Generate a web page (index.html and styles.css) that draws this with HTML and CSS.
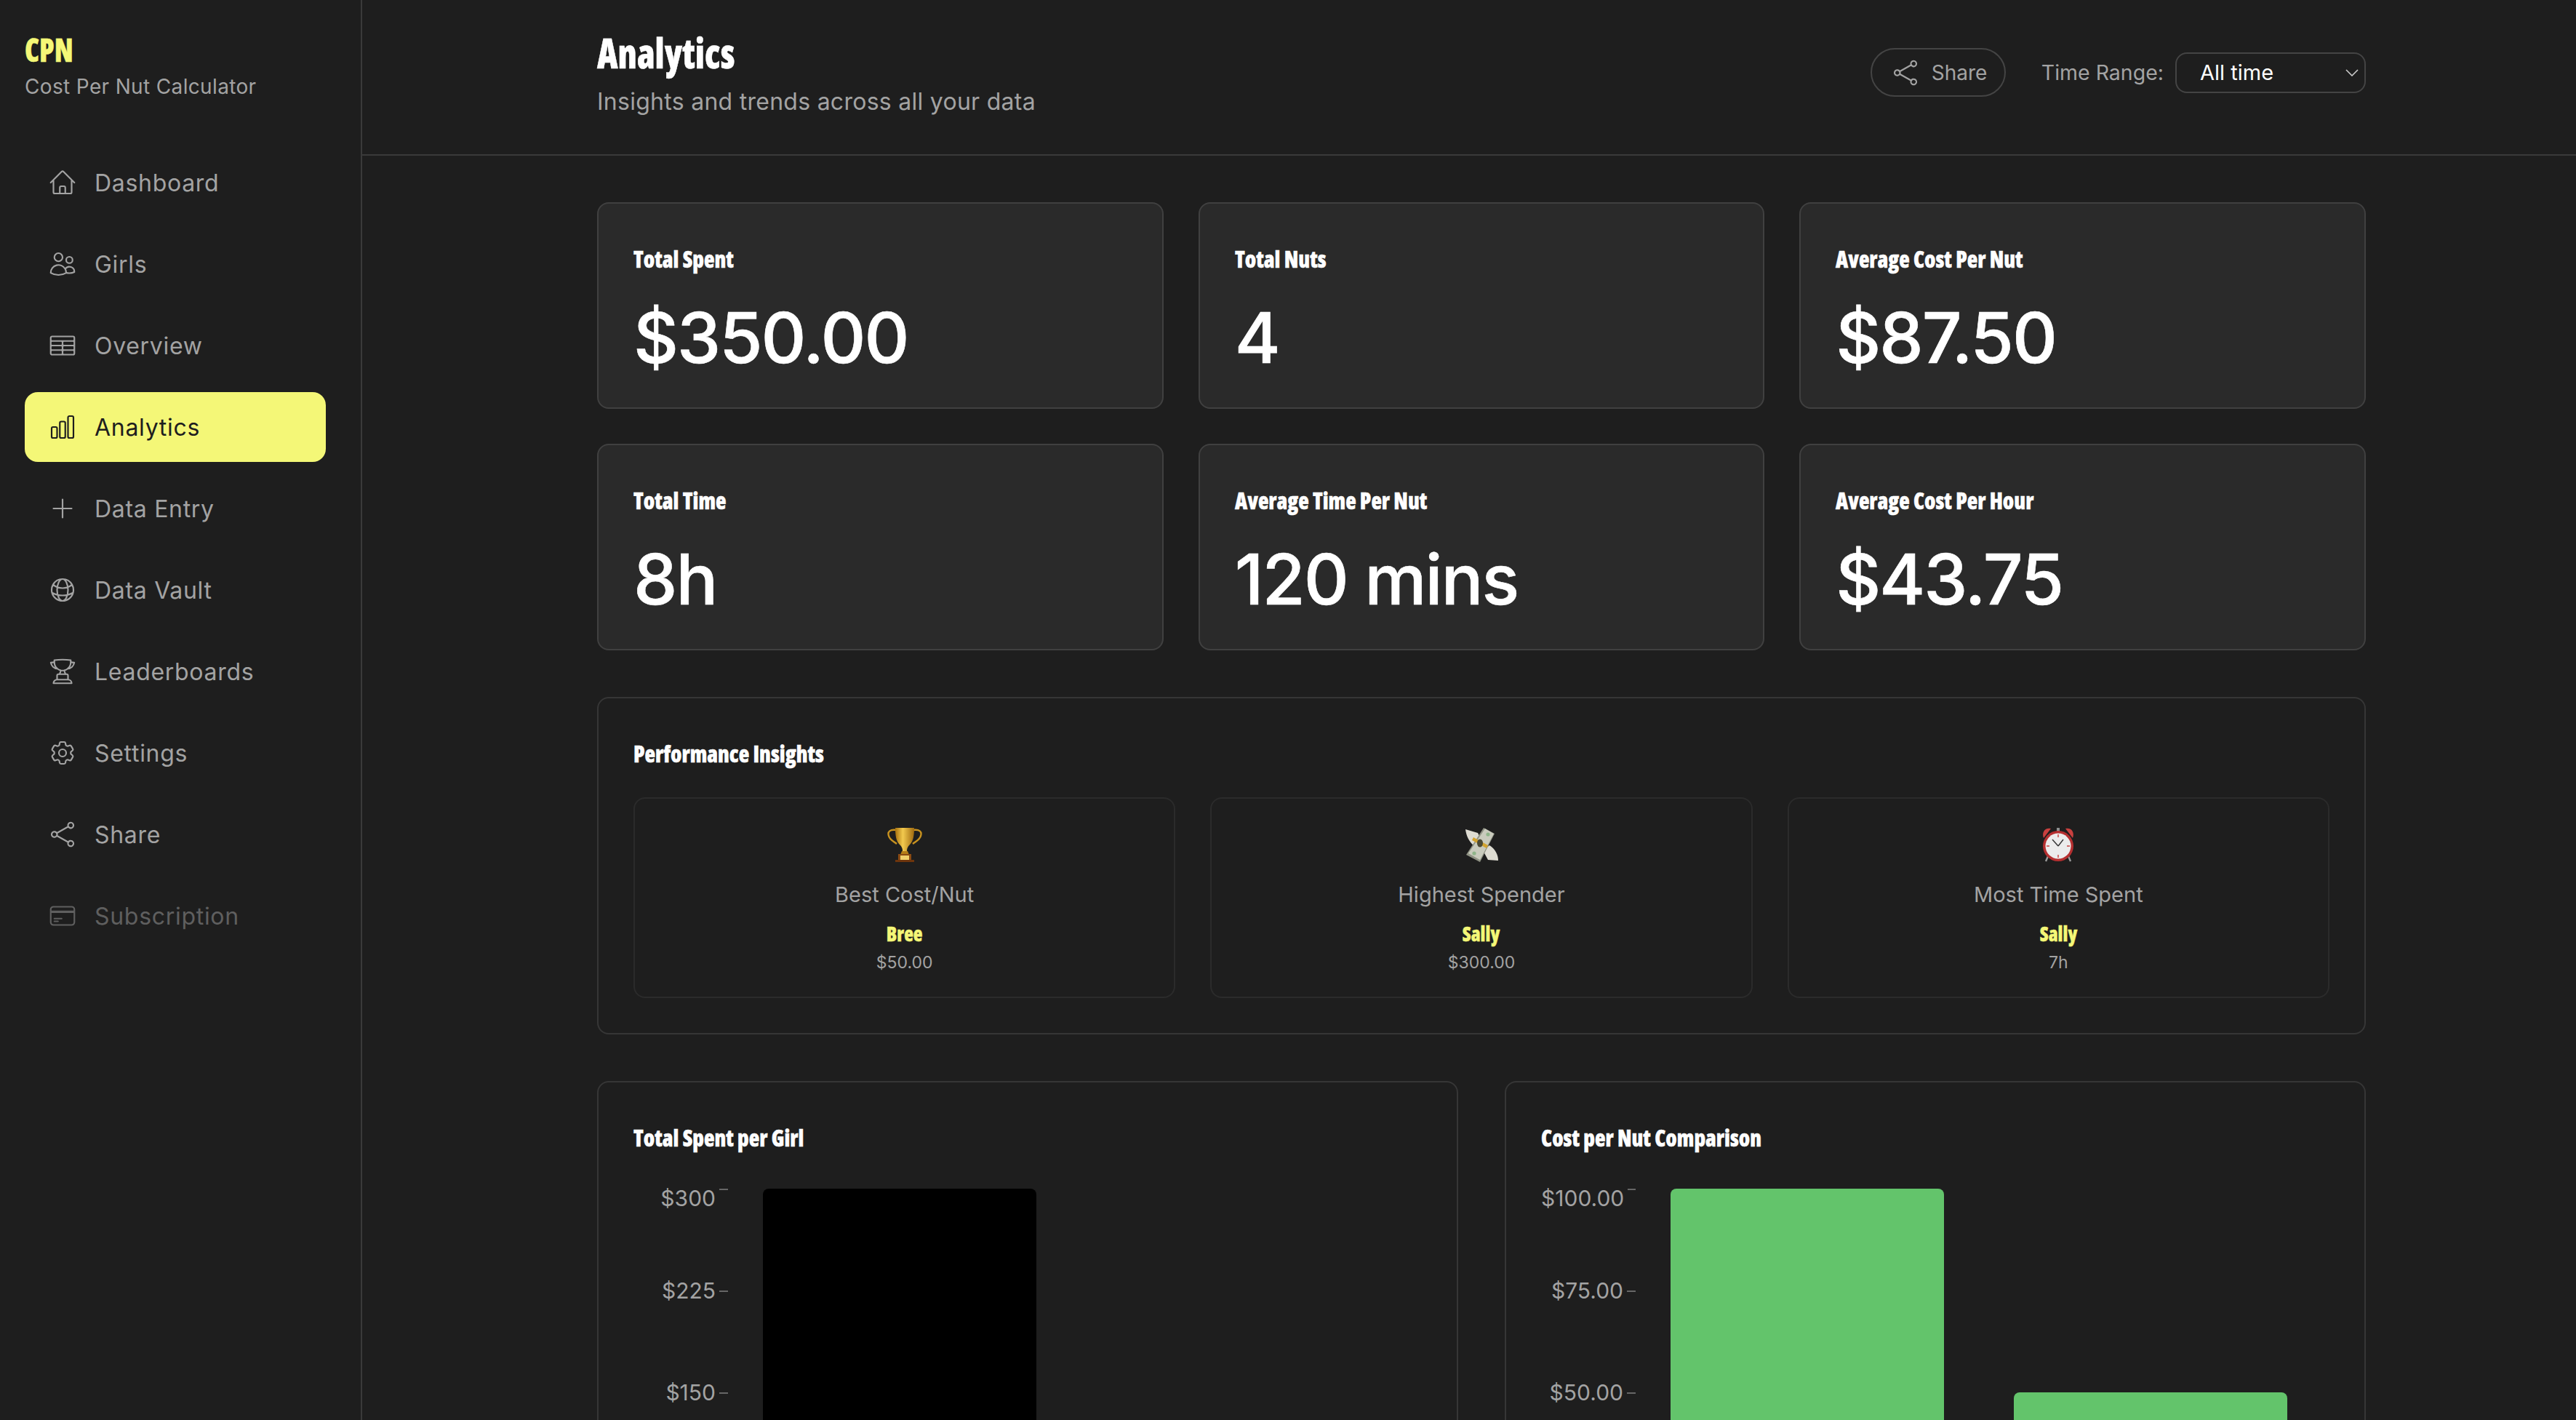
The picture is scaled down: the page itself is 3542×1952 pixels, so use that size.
FILE: index.html
```html
<!DOCTYPE html>
<html lang="en">
<head>
    <meta charset="UTF-8">
    <meta name="viewport" content="width=device-width, initial-scale=1.0">
    <title>CPN - Analytics</title>
    <link rel="stylesheet" href="styles.css">
</head>
<body>
    <aside class="sidebar">
        <div class="brand display">CPN</div>
        <div class="tagline">Cost Per Nut Calculator</div>
        <nav class="nav">
            <a class="nav-item"><svg class="icon" viewBox="0 0 24 24"><path d="m2.25 12 8.954-8.955c.44-.439 1.152-.439 1.591 0L21.75 12M4.5 9.75v10.125c0 .621.504 1.125 1.125 1.125H9.75v-4.875c0-.621.504-1.125 1.125-1.125h2.25c.621 0 1.125.504 1.125 1.125V21h4.125c.621 0 1.125-.504 1.125-1.125V9.75M8.25 21h8.25"/></svg>Dashboard</a>
            <a class="nav-item"><svg class="icon" viewBox="0 0 24 24"><path d="M15 19.128a9.38 9.38 0 0 0 2.625.372 9.337 9.337 0 0 0 4.121-.952 4.125 4.125 0 0 0-7.533-2.493M15 19.128v-.003c0-1.113-.285-2.16-.786-3.07M15 19.128v.106A12.318 12.318 0 0 1 8.624 21c-2.331 0-4.512-.645-6.374-1.766l-.001-.109a6.375 6.375 0 0 1 11.964-3.07M12 6.375a3.375 3.375 0 1 1-6.75 0 3.375 3.375 0 0 1 6.75 0Zm8.25 2.25a2.625 2.625 0 1 1-5.25 0 2.625 2.625 0 0 1 5.25 0Z"/></svg>Girls</a>
            <a class="nav-item"><svg class="icon" viewBox="0 0 24 24"><path d="M3.375 19.5h17.25m-17.25 0a1.125 1.125 0 0 1-1.125-1.125M3.375 19.5h7.5c.621 0 1.125-.504 1.125-1.125m-9.75 0V5.625m0 12.75v-1.5c0-.621.504-1.125 1.125-1.125m18.375 2.625V5.625m0 12.75c0 .621-.504 1.125-1.125 1.125m1.125-1.125v-1.5c0-.621-.504-1.125-1.125-1.125m0 3.75h-7.5A1.125 1.125 0 0 1 12 18.375m9.75-12.75c0-.621-.504-1.125-1.125-1.125H3.375c-.621 0-1.125.504-1.125 1.125m19.5 0v1.5c0 .621-.504 1.125-1.125 1.125M2.25 5.625v1.5c0 .621.504 1.125 1.125 1.125m0 0h17.25m-17.25 0h7.5c.621 0 1.125.504 1.125 1.125M3.375 8.25c-.621 0-1.125.504-1.125 1.125v1.5c0 .621.504 1.125 1.125 1.125m17.25-3.75h-7.5c-.621 0-1.125.504-1.125 1.125m8.625-1.125c.621 0 1.125.504 1.125 1.125v1.5c0 .621-.504 1.125-1.125 1.125m-17.25 0h7.5m-7.5 0c-.621 0-1.125.504-1.125 1.125v1.5c0 .621.504 1.125 1.125 1.125M12 10.875v-1.5m0 1.5c0 .621-.504 1.125-1.125 1.125M12 10.875c0 .621.504 1.125 1.125 1.125m-2.25 0c.621 0 1.125.504 1.125 1.125M13.125 12h7.5m-7.5 0c-.621 0-1.125.504-1.125 1.125M20.625 12c.621 0 1.125.504 1.125 1.125v1.5c0 .621-.504 1.125-1.125 1.125m-17.25 0h7.5M12 14.625v-1.5m0 1.5c0 .621-.504 1.125-1.125 1.125M12 14.625c0 .621.504 1.125 1.125 1.125m-2.25 0c.621 0 1.125.504 1.125 1.125m0 1.5v-1.5m0 0c0-.621.504-1.125 1.125-1.125m0 0h7.5"/></svg>Overview</a>
            <a class="nav-item active"><svg class="icon" viewBox="0 0 24 24"><path d="M3 13.125C3 12.504 3.504 12 4.125 12h2.25c.621 0 1.125.504 1.125 1.125v6.75C7.5 20.496 6.996 21 6.375 21h-2.25A1.125 1.125 0 0 1 3 19.875v-6.75ZM9.75 8.625c0-.621.504-1.125 1.125-1.125h2.25c.621 0 1.125.504 1.125 1.125v11.25c0 .621-.504 1.125-1.125 1.125h-2.25a1.125 1.125 0 0 1-1.125-1.125V8.625ZM16.5 4.125c0-.621.504-1.125 1.125-1.125h2.25C20.496 3 21 3.504 21 4.125v15.75c0 .621-.504 1.125-1.125 1.125h-2.25a1.125 1.125 0 0 1-1.125-1.125V4.125Z"/></svg>Analytics</a>
            <a class="nav-item"><svg class="icon" viewBox="0 0 24 24"><path d="M12 4.5v15m7.5-7.5h-15"/></svg>Data Entry</a>
            <a class="nav-item"><svg class="icon" viewBox="0 0 24 24"><path d="M12 21a9.004 9.004 0 0 0 8.716-6.747M12 21a9.004 9.004 0 0 1-8.716-6.747M12 21c2.485 0 4.5-4.03 4.5-9S14.485 3 12 3m0 18c-2.485 0-4.5-4.03-4.5-9S9.515 3 12 3m0 0a8.997 8.997 0 0 1 7.843 4.582M12 3a8.997 8.997 0 0 0-7.843 4.582m15.686 0A11.953 11.953 0 0 1 12 10.5c-2.998 0-5.74-1.1-7.843-2.918m15.686 0A8.959 8.959 0 0 1 21 12c0 .778-.099 1.533-.284 2.253m0 0A17.919 17.919 0 0 1 12 16.5c-3.162 0-6.133-.815-8.716-2.247m0 0A9.015 9.015 0 0 1 3 12c0-1.605.42-3.113 1.157-4.418"/></svg>Data Vault</a>
            <a class="nav-item"><svg class="icon" viewBox="0 0 24 24"><path d="M16.5 18.75h-9m9 0a3 3 0 0 1 3 3h-15a3 3 0 0 1 3-3m9 0v-3.375c0-.621-.503-1.125-1.125-1.125h-.871M7.5 18.75v-3.375c0-.621.504-1.125 1.125-1.125h.872m5.007 0H9.497m5.007 0a7.454 7.454 0 0 1-.982-3.172M9.497 14.25a7.454 7.454 0 0 0 .981-3.172M5.25 4.236c-.982.143-1.954.317-2.916.52A6.003 6.003 0 0 0 7.73 9.728M5.25 4.236V4.5c0 2.108.966 3.99 2.48 5.228M5.25 4.236V2.721C7.456 2.41 9.71 2.25 12 2.25c2.291 0 4.545.16 6.75.47v1.516M7.73 9.728a6.726 6.726 0 0 0 2.748 1.35m8.272-6.842V4.5c0 2.108-.966 3.99-2.48 5.228m2.48-5.492a46.32 46.32 0 0 1 2.916.52 6.003 6.003 0 0 1-5.395 4.972m0 0a6.726 6.726 0 0 1-2.749 1.35m0 0a6.772 6.772 0 0 1-3.044 0"/></svg>Leaderboards</a>
            <a class="nav-item"><svg class="icon" viewBox="0 0 24 24"><path d="M9.594 3.94c.09-.542.56-.94 1.11-.94h2.593c.55 0 1.02.398 1.11.94l.213 1.281c.063.374.313.686.645.87.074.04.147.083.22.127.325.196.72.257 1.075.124l1.217-.456a1.125 1.125 0 0 1 1.37.49l1.296 2.247a1.125 1.125 0 0 1-.26 1.431l-1.003.827c-.293.241-.438.613-.43.992a7.723 7.723 0 0 1 0 .255c-.008.378.137.75.43.991l1.004.827c.424.35.534.955.26 1.43l-1.298 2.247a1.125 1.125 0 0 1-1.369.491l-1.217-.456c-.355-.133-.75-.072-1.076.124a6.47 6.47 0 0 1-.22.128c-.331.183-.581.495-.644.869l-.213 1.281c-.09.543-.56.94-1.11.94h-2.594c-.55 0-1.019-.398-1.11-.94l-.213-1.281c-.062-.374-.312-.686-.644-.87a6.52 6.52 0 0 1-.22-.127c-.325-.196-.72-.257-1.076-.124l-1.217.456a1.125 1.125 0 0 1-1.369-.49l-1.297-2.247a1.125 1.125 0 0 1 .26-1.431l1.004-.827c.292-.24.437-.613.43-.991a6.932 6.932 0 0 1 0-.255c.007-.38-.138-.751-.43-.992l-1.004-.827a1.125 1.125 0 0 1-.26-1.43l1.297-2.247a1.125 1.125 0 0 1 1.37-.491l1.216.456c.356.133.751.072 1.076-.124.072-.044.146-.086.22-.128.332-.183.582-.495.644-.869l.214-1.28Z"/><path d="M15 12a3 3 0 1 1-6 0 3 3 0 0 1 6 0Z"/></svg>Settings</a>
            <a class="nav-item"><svg class="icon" viewBox="0 0 24 24"><path d="M7.217 10.907a2.25 2.25 0 1 0 0 2.186m0-2.186c.18.324.283.696.283 1.093s-.103.77-.283 1.093m0-2.186 9.566-5.314m-9.566 7.5 9.566 5.314m0 0a2.25 2.25 0 1 0 3.935 2.186 2.25 2.25 0 0 0-3.935-2.186Zm0-12.814a2.25 2.25 0 1 0 3.933-2.185 2.25 2.25 0 0 0-3.933 2.185Z"/></svg>Share</a>
            <a class="nav-item disabled"><svg class="icon" viewBox="0 0 24 24"><path d="M2.25 8.25h19.5M2.25 9h19.5m-16.5 5.25h6m-6 2.25h3m-3.75 3h15a2.25 2.25 0 0 0 2.25-2.25V6.75A2.25 2.25 0 0 0 19.5 4.5h-15a2.25 2.25 0 0 0-2.25 2.25v10.5A2.25 2.25 0 0 0 4.5 19.5Z"/></svg>Subscription</a>
        </nav>
    </aside>

    <main class="main">
        <header class="page-header">
            <div>
                <h1 class="display">Analytics</h1>
                <p class="subtitle">Insights and trends across all your data</p>
            </div>
            <div class="header-actions">
                <button class="share-btn" type="button"><svg class="icon" viewBox="0 0 24 24"><path d="M7.217 10.907a2.25 2.25 0 1 0 0 2.186m0-2.186c.18.324.283.696.283 1.093s-.103.77-.283 1.093m0-2.186 9.566-5.314m-9.566 7.5 9.566 5.314m0 0a2.25 2.25 0 1 0 3.935 2.186 2.25 2.25 0 0 0-3.935-2.186Zm0-12.814a2.25 2.25 0 1 0 3.933-2.185 2.25 2.25 0 0 0-3.933 2.185Z"/></svg>Share</button>
                <label class="range-label" for="range">Time Range:</label>
                <select class="range-select" id="range">
                    <option>All time</option>
                    <option>Last 30 days</option>
                </select>
            </div>
        </header>

        <div class="content">
            <section class="stat-grid">
                <div class="stat-card"><div class="stat-label display">Total Spent</div><div class="stat-value">$350.00</div></div>
                <div class="stat-card"><div class="stat-label display">Total Nuts</div><div class="stat-value">4</div></div>
                <div class="stat-card"><div class="stat-label display">Average Cost Per Nut</div><div class="stat-value">$87.50</div></div>
                <div class="stat-card"><div class="stat-label display">Total Time</div><div class="stat-value">8h</div></div>
                <div class="stat-card"><div class="stat-label display">Average Time Per Nut</div><div class="stat-value">120 mins</div></div>
                <div class="stat-card"><div class="stat-label display">Average Cost Per Hour</div><div class="stat-value">$43.75</div></div>
            </section>

            <section class="panel">
                <h2 class="panel-title display">Performance Insights</h2>
                <div class="insight-grid">
                    <div class="insight">
                        <svg class="emoji" viewBox="0 0 48 48">
                            <defs>
                                <linearGradient id="gold" x1="0" x2="1" y1="0" y2="0">
                                    <stop offset="0" stop-color="#a8720f"/>
                                    <stop offset=".4" stop-color="#f2c94e"/>
                                    <stop offset="1" stop-color="#a06a10"/>
                                </linearGradient>
                            </defs>
                            <path d="M12 4C4 3 0 6 2 12c1 5 6 7 11 11M36 4c8-1 12 2 10 8-1 5-6 7-11 11" fill="none" stroke="#c8921f" stroke-width="2.4"/>
                            <path d="M11 1h26c0 10-1 18-6 23-3 3-4 5-4 9h-6c0-4-1-6-4-9C12 19 11 11 11 1Z" fill="url(#gold)"/>
                            <path d="M20 33h8l2 5H18Z" fill="#b57d17"/>
                            <rect x="15" y="37" width="18" height="9" fill="#8a4a12"/>
                            <rect x="18" y="39" width="12" height="6" fill="#f0cf6a"/>
                            <rect x="11" y="45" width="26" height="3" fill="#6d340c"/>
                        </svg>
                        <div class="insight-label">Best Cost/Nut</div>
                        <div class="insight-name display">Bree</div>
                        <div class="insight-value">$50.00</div>
                    </div>
                    <div class="insight">
                        <svg class="emoji" viewBox="0 0 48 48">
                            <path d="M2 3l17 5 6 12-11 6C7 20 3 12 2 3ZM47 46l-14-1-7-13 9-7c8 5 12 13 12 21Z" fill="#dedcd2"/>
                            <path d="M27 1l15 8-20 39L3 38Z" fill="#8f9284"/>
                            <path d="M29 2l12 7-19 36L6 36Z" fill="#c9cbbd"/>
                            <path d="M13 14l20 11-2 4-20-11Z" fill="#d2a32f"/>
                            <ellipse cx="22" cy="22" rx="4" ry="5.5" fill="#4c4a35"/>
                            <circle cx="33" cy="10" r="2.6" fill="#8fb58a"/>
                            <circle cx="14" cy="36" r="2.6" fill="#8fb58a"/>
                        </svg>
                        <div class="insight-label">Highest Spender</div>
                        <div class="insight-name display">Sally</div>
                        <div class="insight-value">$300.00</div>
                    </div>
                    <div class="insight">
                        <svg class="emoji" viewBox="0 0 48 48">
                            <path d="M4 15C1 7 6 0 14 2ZM44 15c3-8-2-15-10-13Z" fill="#c9403f"/>
                            <rect x="22" y="1" width="4" height="5" fill="#8e8e8e"/>
                            <path d="M10 40l-3 7M38 40l3 7" stroke="#9a9a9a" stroke-width="2.4"/>
                            <circle cx="24" cy="26" r="21" fill="#b52f30"/>
                            <circle cx="24" cy="26" r="17.5" fill="#ececec"/>
                            <path d="M24 10v4M24 38v4M8 26h4M36 26h4" stroke="#c9403f" stroke-width="1.4"/>
                            <path d="M24 26L16 17M24 26l7-9" stroke="#333" stroke-width="1.4" fill="none"/>
                        </svg>
                        <div class="insight-label">Most Time Spent</div>
                        <div class="insight-name display">Sally</div>
                        <div class="insight-value">7h</div>
                    </div>
                </div>
            </section>

            <section class="chart-grid">
                <div class="panel">
                    <h2 class="chart-title display">Total Spent per Girl</h2>
                    <div class="chart">
                        <div class="y-axis">
                            <div class="tick"><span class="tick-label first">$300</span></div>
                            <div class="tick"><span class="tick-label">$225</span></div>
                            <div class="tick"><span class="tick-label">$150</span></div>
                        </div>
                        <div class="plot">
                            <div class="bar black" style="height: 560px"></div>
                            <div class="bar black" style="height: 93px"></div>
                        </div>
                    </div>
                </div>
                <div class="panel">
                    <h2 class="chart-title display">Cost per Nut Comparison</h2>
                    <div class="chart">
                        <div class="y-axis">
                            <div class="tick"><span class="tick-label first">$100.00</span></div>
                            <div class="tick"><span class="tick-label">$75.00</span></div>
                            <div class="tick"><span class="tick-label">$50.00</span></div>
                        </div>
                        <div class="plot">
                            <div class="bar green" style="height: 560px"></div>
                            <div class="bar green" style="height: 280px"></div>
                        </div>
                    </div>
                </div>
            </section>
        </div>
    </main>
</body>
</html>
```

FILE: styles.css
```css
* {
    box-sizing: border-box;
}
html, body {
    height: 100%;
}
body {
    margin: 0;
    display: flex;
    overflow: hidden;
    background-color: #1e1e1e;
    color: #fff;
    font-family: Inter, "Liberation Sans", sans-serif;
}
h1, h2, p {
    margin: 0;
}
/* heavy condensed face for titles, squeezed a bit more than the font allows */
.display {
    font-family: "Open Sans", "Liberation Sans", sans-serif;
    font-stretch: 75%;
    font-weight: 800;
    -webkit-text-stroke: 0.5px currentColor;
    transform: scaleX(0.935);
    transform-origin: left;
}
.icon {
    width: 40px;
    height: 40px;
    flex: none;
    fill: none;
    stroke: currentColor;
    stroke-width: 1.3;
    stroke-linecap: round;
    stroke-linejoin: round;
}

/* sidebar */
.sidebar {
    width: 498px;
    flex: none;
    padding: 44px 48px 0 34px;
    border-right: 2px solid #3a3a3a;
}
.brand {
    font-size: 44px;
    line-height: 48px;
    color: #f4f777;
    transform: scaleX(0.9);
}
.tagline {
    margin-top: 7px;
    font-size: 28px;
    line-height: 40px;
    letter-spacing: 0.35px;
    color: #a3a3a3;
}
.nav {
    margin-top: 64px;
    display: flex;
    flex-direction: column;
    gap: 16px;
}
.nav-item {
    height: 96px;
    padding-left: 32px;
    display: flex;
    align-items: center;
    gap: 24px;
    border-radius: 18px;
    font-size: 32px;
    letter-spacing: 0.7px;
    color: #a3a3a3;
}
.nav-item.active {
    background-color: #f4f777;
    color: #1e1e1e;
}
.nav-item.disabled {
    color: #5f5f5f;
}

/* header */
.main {
    flex: 1;
    min-width: 0;
}
.page-header {
    height: 214px;
    padding: 42px 289px 0 323px;
    display: flex;
    justify-content: space-between;
    border-bottom: 2px solid #3a3a3a;
}
h1.display {
    font-size: 56px;
    line-height: 60px;
    transform: scaleX(0.89);
}
.subtitle {
    margin-top: 16px;
    font-size: 32px;
    line-height: 44px;
    letter-spacing: 0.27px;
    color: #a3a3a3;
}
.header-actions {
    height: 67px;
    margin-top: 24px;
    display: flex;
    align-items: center;
}
.share-btn {
    width: 186px;
    height: 67px;
    padding: 0 0 0 26px;
    display: flex;
    align-items: center;
    gap: 16px;
    background: none;
    border: 2px solid #444;
    border-radius: 34px;
    color: #a3a3a3;
    font-family: inherit;
    font-size: 28px;
}
.range-label {
    margin: 0 16px 0 49px;
    font-size: 28.5px;
    color: #a3a3a3;
}
.range-select {
    width: 262px;
    height: 56px;
    padding: 0 0 0 32px;
    appearance: none;
    background: #1e1e1e url("data:image/svg+xml,%3Csvg xmlns='http://www.w3.org/2000/svg' width='18' height='10'%3E%3Cpath d='M1 1l8 8 8-8' fill='none' stroke='%23ccc' stroke-width='1.6'/%3E%3C/svg%3E") no-repeat right 8px center;
    border: 2px solid #444;
    border-radius: 16px;
    color: #fff;
    font-family: inherit;
    font-size: 29px;
}

/* content */
.content {
    padding: 64px 289px 0 323px;
    display: flex;
    flex-direction: column;
    gap: 64px;
}
.stat-grid {
    display: grid;
    grid-template-columns: repeat(3, 1fr);
    gap: 48px;
}
.stat-card {
    height: 284px;
    padding: 48px;
    background-color: #2a2a2a;
    border: 2px solid #404040;
    border-radius: 16px;
}
.stat-label {
    font-size: 32px;
    line-height: 56px;
}
.stat-value {
    margin-top: 32px;
    font-size: 96px;
    font-weight: 500;
    line-height: 96px;
    letter-spacing: -2px;
    -webkit-text-stroke: 0.6px currentColor;
}
.panel {
    padding: 48px;
    border: 2px solid #363636;
    border-radius: 16px;
}
.panel-title {
    font-size: 32px;
    line-height: 56px;
    margin-bottom: 32px;
}
.insight-grid {
    display: grid;
    grid-template-columns: repeat(3, 1fr);
    gap: 48px;
}
.insight {
    padding: 39px 0 29px;
    display: flex;
    flex-direction: column;
    align-items: center;
    border: 2px solid #2b2b2b;
    border-radius: 16px;
}
.emoji {
    width: 48px;
    height: 48px;
    margin-bottom: 25px;
}
.insight-label {
    font-size: 29px;
    line-height: 40px;
    color: #a3a3a3;
}
.insight-name {
    margin-top: 13px;
    font-size: 28px;
    line-height: 40px;
    color: #f4f777;
    transform-origin: center;
}
.insight-value {
    margin-top: 2px;
    font-size: 23px;
    line-height: 36px;
    color: #a3a3a3;
}

/* charts */
.chart-grid {
    display: grid;
    grid-template-columns: repeat(2, 1fr);
    gap: 64px;
}
.chart-title {
    font-size: 32px;
    line-height: 56px;
    margin-bottom: 42px;
}
.chart {
    display: flex;
}
.y-axis {
    width: 130px;
    flex: none;
}
.tick {
    height: 140px;
    display: flex;
    justify-content: flex-end;
    align-items: flex-start;
}
.tick::after {
    content: "";
    width: 12px;
    height: 2px;
    margin-left: 5px;
    background-color: #666;
}
.tick-label {
    margin-top: -19px;
    font-size: 30px;
    line-height: 38px;
    color: #a3a3a3;
}
.tick-label.first {
    margin-top: -6px;
}
.plot {
    height: 560px;
    padding: 0 48px;
    display: flex;
    align-items: flex-end;
    gap: 96px;
}
.bar {
    width: 376px;
    border-radius: 8px 8px 0 0;
}
.black {
    background-color: #000;
}
.green {
    background-color: #63c46b;
}
```
